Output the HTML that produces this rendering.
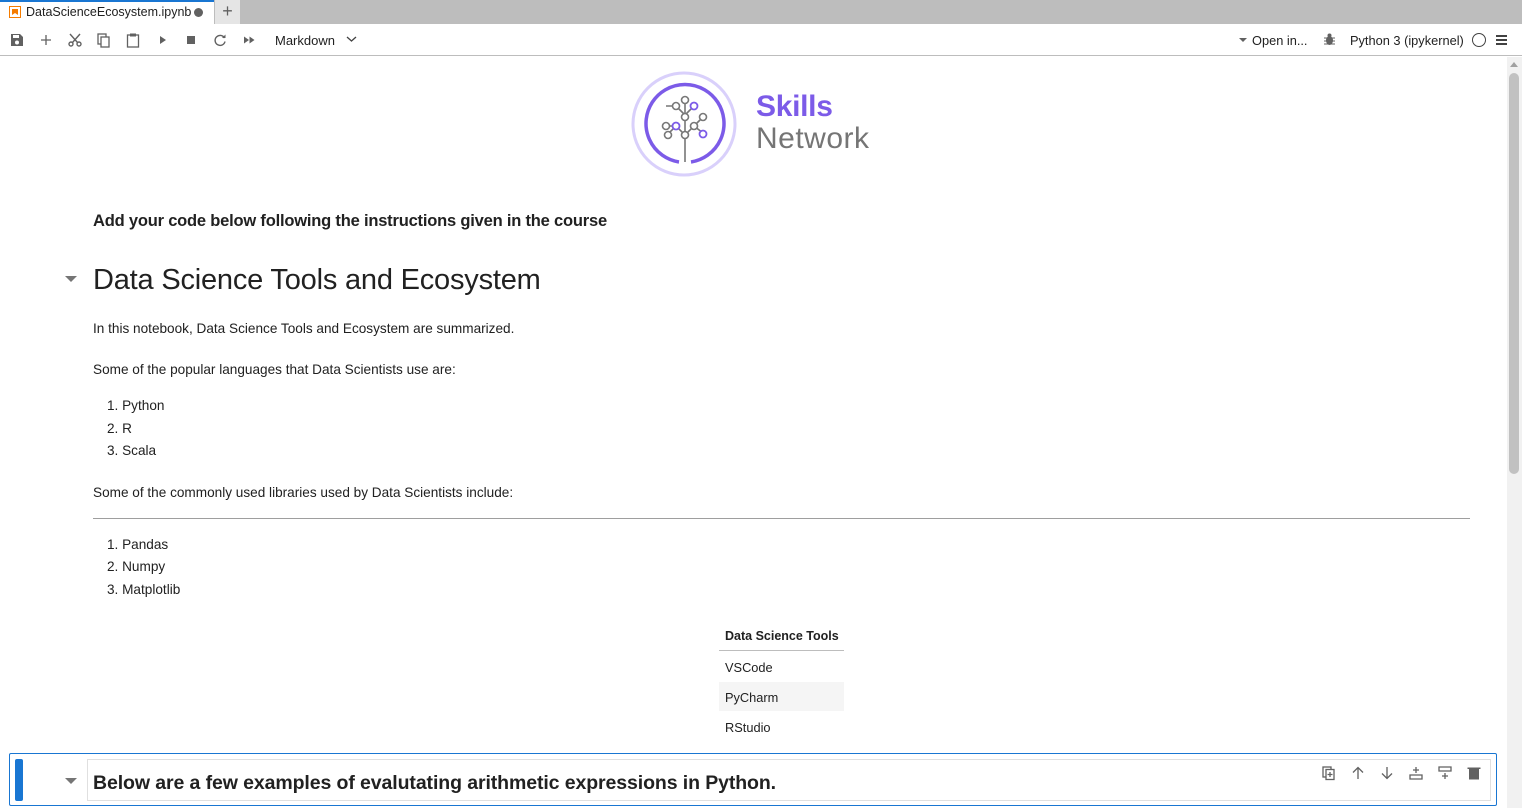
<!DOCTYPE html>
<html><head><meta charset="utf-8"><style>
*{margin:0;padding:0;box-sizing:border-box}
body{width:1522px;height:808px;overflow:hidden;background:#fff;font-family:"Liberation Sans",sans-serif;color:#212121;position:relative}
.a{position:absolute;white-space:nowrap}
.tabbar{left:0;top:0;width:1522px;height:24px;background:#bdbdbd}
.tab{left:0;top:0;width:214px;height:24px;background:#fff;border-top:2px solid #1976d2}
.plus{left:215px;top:0;width:25px;height:24px;background:#e5e5e5;font-size:18px;color:#616161;text-align:center;line-height:23px}
.tb{left:0;top:24px;width:1522px;height:32px;border-bottom:1px solid #bdbdbd;background:#fff}
.ic{position:absolute;top:32px;width:16px;height:16px}
.t13{font-size:13.6px}
.sb{left:1507px;top:57px;width:15px;height:751px;background:#f1f1f1}
</style></head><body>
<div class="a tabbar"></div>
<div class="a tab"></div>
<svg class="a" style="left:9px;top:6px" width="12" height="12"><rect x="0.5" y="0.5" width="11" height="11" fill="#fff" stroke="#f57c00"/><path d="M3 3h6v6l-3-2-3 2z" fill="#f57c00"/></svg>
<div class="a" style="left:26px;top:5px;font-size:12.5px;color:#212121">DataScienceEcosystem.ipynb</div>
<div class="a" style="left:194px;top:8px;width:9px;height:9px;border-radius:50%;background:#616161"></div>
<div class="a plus">+</div>
<div class="a tb"></div>
<svg class="ic" style="left:9px" viewBox="0 0 16 16"><path d="M2 2h9l3 3v9H2z" fill="#616161"/><rect x="4" y="3" width="6" height="3" fill="#fff"/><circle cx="8" cy="10.5" r="2" fill="#fff"/></svg>
<svg class="ic" style="left:38px" viewBox="0 0 16 16"><path d="M8 3v10M3 8h10" stroke="#616161" stroke-width="1.3"/></svg>
<svg class="ic" style="left:67px" viewBox="0 0 16 16"><circle cx="4" cy="12" r="2" fill="none" stroke="#616161" stroke-width="1.4"/><circle cx="12" cy="12" r="2" fill="none" stroke="#616161" stroke-width="1.4"/><path d="M5.5 10.5L13 2M10.5 10.5L3 2" stroke="#616161" stroke-width="1.4"/></svg>
<svg class="ic" style="left:96px" viewBox="0 0 16 16"><rect x="2" y="2" width="8" height="10" fill="none" stroke="#616161" stroke-width="1.3"/><rect x="5" y="5" width="8" height="10" fill="#fff" stroke="#616161" stroke-width="1.3"/></svg>
<svg class="ic" style="left:125px" viewBox="0 0 16 16"><rect x="2.5" y="3" width="11" height="12" fill="none" stroke="#616161" stroke-width="1.3"/><rect x="5" y="1.5" width="6" height="3" fill="#616161"/></svg>
<svg class="ic" style="left:155px" viewBox="0 0 16 16"><path d="M5 4l6 4-6 4z" fill="#616161"/></svg>
<svg class="ic" style="left:183px" viewBox="0 0 16 16"><rect x="4" y="4" width="8" height="8" fill="#616161"/></svg>
<svg class="ic" style="left:212px" viewBox="0 0 16 16"><path d="M12.5 6A5 5 0 1 0 13 9.5" fill="none" stroke="#616161" stroke-width="1.4"/><path d="M10 6h3.5V2.5" fill="#616161"/></svg>
<svg class="ic" style="left:241px" viewBox="0 0 16 16"><path d="M3 4.5l5 3.5-5 3.5zM8.5 4.5l5 3.5-5 3.5z" fill="#616161"/></svg>
<div class="a" style="left:275px;top:33px;font-size:13px">Markdown</div>
<svg class="a" style="left:346px;top:35px" width="11" height="8"><path d="M1 2l4.5 4L10 2" stroke="#424242" fill="none" stroke-width="1.3"/></svg>
<svg class="a" style="left:1239px;top:38px" width="8" height="5"><path d="M0 0h8L4 4z" fill="#616161"/></svg>
<div class="a" style="left:1252px;top:33px;font-size:12.8px">Open in...</div>
<svg class="a" style="left:1323px;top:33px" width="13" height="13" viewBox="0 0 13 13"><ellipse cx="6.5" cy="7.5" rx="3.5" ry="4.5" fill="#616161"/><path d="M1 5h11M1 8h11M1 11h11" stroke="#616161"/><circle cx="6.5" cy="2.5" r="2" fill="#616161"/></svg>
<div class="a" style="left:1350px;top:33px;font-size:12.8px">Python 3 (ipykernel)</div>
<div class="a" style="left:1472px;top:33px;width:14px;height:14px;border:1.3px solid #424242;border-radius:50%"></div>
<svg class="a" style="left:1495px;top:34px" width="13" height="12"><path d="M1 2h11M1 6h11M1 10h11" stroke="#424242" stroke-width="2"/></svg>
<div class="a sb"></div>
<div class="a" style="left:1509px;top:73px;width:10px;height:401px;background:#c1c1c1;border-radius:5px"></div>
<svg class="a" style="left:1509px;top:60px" width="10" height="8"><path d="M1 7L5 2l4 5z" fill="#a0a0a0"/></svg>

<svg class="a" style="left:630px;top:70px" width="110" height="110" viewBox="0 0 110 110">
<circle cx="54" cy="54" r="51" fill="none" stroke="#d9d0fb" stroke-width="3"/>
<path d="M49 92A39 39 0 1 1 61 92" fill="none" stroke="#7c5be8" stroke-width="3.5"/>
<path d="M55 92V65M55 65l-9-9M55 65l9-9M55 65V45M55 45V30M55 45l9-9M55 45l-9-9M46 56l-10 0M46 56l-8 8M64 56l9-9M64 56l9 7M46 36l-10 0" stroke="#777" stroke-width="1.6" fill="none"/>
<g fill="#fff" stroke="#777" stroke-width="1.6"><circle cx="55" cy="30" r="3.5"/><circle cx="55" cy="47" r="3.5"/><circle cx="55" cy="65" r="3.5"/><circle cx="36" cy="56" r="3.5"/><circle cx="38" cy="65" r="3.5"/><circle cx="73" cy="47" r="3.5"/><circle cx="64" cy="56" r="3.5"/><circle cx="46" cy="36" r="3.5"/></g>
<g fill="#fff" stroke="#7c5be8" stroke-width="1.8"><circle cx="64" cy="36" r="3.5"/><circle cx="46" cy="56" r="3.5"/><circle cx="73" cy="64" r="3.5"/></g>
</svg>
<div class="a" style="left:756px;top:90px;font-size:30px;font-weight:bold;color:#7c5be8;letter-spacing:-0.3px">Skills</div>
<div class="a" style="left:756px;top:122px;font-size:30px;color:#757575;letter-spacing:0.5px">Network</div>

<div class="a" style="left:93px;top:212px;font-size:16.5px;font-weight:bold;letter-spacing:-0.2px">Add your code below following the instructions given in the course</div>
<svg class="a" style="left:65px;top:276px" width="12" height="7"><path d="M0 0h12L6 6z" fill="#757575"/></svg>
<div class="a" style="left:93px;top:264px;font-size:29px;letter-spacing:-0.2px">Data Science Tools and Ecosystem</div>
<div class="a t13" style="left:93px;top:321px">In this notebook, Data Science Tools and Ecosystem are summarized.</div>
<div class="a t13" style="left:93px;top:362px">Some of the popular languages that Data Scientists use are:</div>
<div class="a t13" style="left:107px;top:398px">1. Python</div>
<div class="a t13" style="left:107px;top:421px">2. R</div>
<div class="a t13" style="left:107px;top:443px">3. Scala</div>
<div class="a t13" style="left:93px;top:485px">Some of the commonly used libraries used by Data Scientists include:</div>
<div class="a" style="left:93px;top:518px;width:1377px;height:1px;background:#9e9e9e"></div>
<div class="a t13" style="left:107px;top:537px">1. Pandas</div>
<div class="a t13" style="left:107px;top:559px">2. Numpy</div>
<div class="a t13" style="left:107px;top:582px">3. Matplotlib</div>

<div class="a" style="left:725px;top:629px;font-size:12.5px;font-weight:bold">Data Science Tools</div>
<div class="a" style="left:719px;top:650px;width:125px;height:1px;background:#bdbdbd"></div>
<div class="a" style="left:725px;top:660px;font-size:12.8px">VSCode</div>
<div class="a" style="left:719px;top:682px;width:125px;height:29px;background:#f5f5f5"></div>
<div class="a" style="left:725px;top:690px;font-size:12.8px">PyCharm</div>
<div class="a" style="left:725px;top:720px;font-size:12.8px">RStudio</div>

<div class="a" style="left:9px;top:753px;width:1488px;height:53px;border:1px solid #1976d2;border-radius:2px"></div>
<div class="a" style="left:15px;top:759px;width:8px;height:42px;background:#1976d2;border-radius:2px"></div>
<svg class="a" style="left:65px;top:778px" width="12" height="7"><path d="M0 0h12L6 6z" fill="#757575"/></svg>
<div class="a" style="left:87px;top:759px;width:1404px;height:42px;border:1px solid #e0e0e0"></div>
<div class="a" style="left:93px;top:772px;font-size:19.5px;font-weight:bold;letter-spacing:-0.1px">Below are a few examples of evalutating arithmetic expressions in Python.</div>
<svg class="a" style="left:1321px;top:765px" width="165" height="16" viewBox="0 0 165 16">
<g fill="none" stroke="#616161" stroke-width="1.3">
<rect x="2" y="2" width="8" height="10"/><rect x="5" y="4.5" width="8" height="10" fill="#fff"/><path d="M9 7v5M6.5 9.5h5"/>
<path d="M37 14V3M32 7.5l5-5 5 5"/>
<path d="M66 2v11M61 8.5l5 5 5-5"/>
<path d="M95 2v6M92 5h6M89 10h12v4H89z"/>
<path d="M118 2h12v4h-12zM124 8v6M121 11h6"/>
</g>
<path d="M148 4h10v10.5h-10zM146.5 2.5h13v1.5h-13z" fill="#616161"/>
</svg>
</body></html>
